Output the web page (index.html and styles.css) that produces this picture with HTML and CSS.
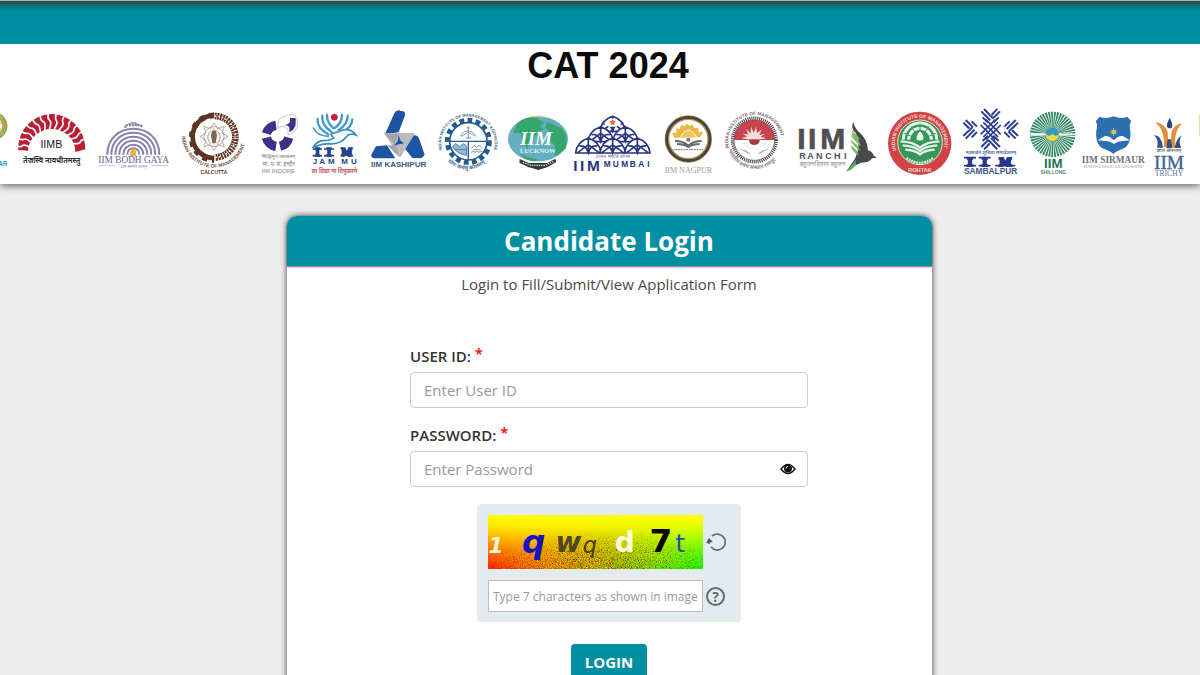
FILE: index.html
```html
<!DOCTYPE html>
<html lang="en">
<head>
<meta charset="utf-8">
<title>CAT 2024 - Candidate Login</title>
<link rel="stylesheet" href="styles.css">
</head>
<body>
<div class="topbar"></div>
<header class="masthead">
  <h1 class="masthead-title">CAT 2024</h1>
  <div class="logos">
    <svg width="12" height="74" viewBox="0 18 36 222" role="img" aria-label="IIM Amritsar">
      <circle cx="-20" cy="78" r="34" fill="none" stroke="#83b85a" stroke-width="14"/>
      <circle cx="-20" cy="78" r="34" fill="none" stroke="#e99a50" stroke-width="12" stroke-dasharray="8 12"/>
      <circle cx="-20" cy="78" r="41" fill="none" stroke="#6aa949" stroke-width="3"/>
      <circle cx="5" cy="78" r="10" fill="none" stroke="#e58345" stroke-width="3"/>
      <text x="22" y="199" text-anchor="end" font-size="19" class="sans bold" fill="#2b9dbe">AR</text>
    </svg>
    <svg width="80" height="74" viewBox="36 18 240 222" role="img" aria-label="IIM Bangalore">
      <defs><path id="ray" d="M155 98C143 86 166 72 153 60C147 54 148 49 151 39" fill="none" stroke="#fff" stroke-width="5"/></defs>
      <path d="M54 148A101 106 0 0 1 256 148L226 156A68 64 0 0 0 84 152L55 150Z" fill="#b91f35"/>
      <use href="#ray" transform="rotate(-81 155 150)"/><use href="#ray" transform="rotate(-68 155 150)"/><use href="#ray" transform="rotate(-55 155 150)"/><use href="#ray" transform="rotate(-42 155 150)"/><use href="#ray" transform="rotate(-29 155 150)"/><use href="#ray" transform="rotate(-16 155 150)"/><use href="#ray" transform="rotate(-3 155 150)"/><use href="#ray" transform="rotate(10 155 150)"/><use href="#ray" transform="rotate(23 155 150)"/><use href="#ray" transform="rotate(36 155 150)"/><use href="#ray" transform="rotate(49 155 150)"/><use href="#ray" transform="rotate(62 155 150)"/><use href="#ray" transform="rotate(75 155 150)"/>
      <text x="154" y="143" text-anchor="middle" font-size="32" class="sans" fill="#222">IIMB</text>
      <text x="155" y="188" text-anchor="middle" font-size="22" class="deva bold" fill="#333">तेजस्वि नावधीतमस्तु</text>
    </svg>
    <svg width="84" height="74" viewBox="276 18 252 222" role="img" aria-label="IIM Bodh Gaya">
      <g fill="none" stroke="#8581ae" stroke-width="6">
        <path d="M322 164C322 60 478 60 478 164M334 164C334 76 466 76 466 164M346 164C346 92 454 92 454 164M358 164C358 108 442 108 442 164M370 164C370 124 430 124 430 164M382 164C382 138 418 138 418 164"/>
        <path d="M376 84v-8h48v8M386 74q14-10 28 0" stroke-dasharray="7 2"/>
      </g>
      <path d="M400 142q-13 16-8 26h16q5-10-8-26" fill="#e8b33c"/>
      <text x="401" y="190" text-anchor="middle" font-size="28" class="serif" fill="#65628f">IIM BODH GAYA</text>
      <path d="M295 197h50m110 0h50" stroke="#aaa8c6" stroke-width="2"/>
      <text x="401" y="204" text-anchor="middle" font-size="12" class="deva" fill="#8c8aae">ज्ञानं सन्मति परमम्</text>
    </svg>
    <svg width="76" height="74" viewBox="18 18 228 222" role="img" aria-label="IIM Calcutta">
      <defs><path id="calcutta-ring" d="M36 107A96 96 0 0 0 228 107"/></defs>
      <g fill="none" stroke="#5f3420">
        <path d="M132 46A64 64 0 0 0 132 174" stroke-width="14"/>
        <path d="M132 46A67 67 0 0 0 132 180" stroke-width="17" stroke-dasharray="15 14"/>
        <path d="M134 48A62 62 0 0 1 134 172" stroke-width="20" stroke-dasharray="6 2"/>
        <path d="M134 48A62 62 0 0 1 134 172" stroke="#fff" stroke-width="5" stroke-dasharray="4 7"/>
      </g>
      <g fill="none" stroke="#9c877b" stroke-width="2">
        <path d="M132 68l11 18 20-7-7 20 18 11-18 11 7 20-20-7-11 18-11-18-20 7 7-20-18-11 18-11-7-20 20 7z"/>
        <circle cx="132" cy="110" r="30"/><circle cx="132" cy="110" r="19" stroke-dasharray="3 2"/>
        <path d="M122 94c-12 14-10 26 0 38M142 94c12 14 10 26 0 38M132 84v50"/>
      </g>
      <path d="M126 92h12l3 15-4 22h-10l-4-22z" fill="#846451"/>
      <text font-size="15" class="sans bold" fill="#735344"><textPath href="#calcutta-ring" startOffset="2">INDIAN INSTITUTE OF MANAGEMENT</textPath></text>
      <text x="132" y="222" text-anchor="middle" font-size="15" class="sans bold" fill="#54382b">CALCUTTA</text>
    </svg>
    <svg width="52" height="74" viewBox="246 18 156 222" role="img" aria-label="IIM Indore">
      <g fill="none" stroke="#3b3388" stroke-width="28">
        <path d="M318 76A35 35 0 0 0 289 101M289 113A35 35 0 0 0 318 139M330 139A35 35 0 0 0 356 113"/>
      </g>
      <path d="M324 86V70q0-18 24-22l20-6 14 12v26q-10 22-28 25v-16q-8-10-18-11z" fill="#fff" stroke="#aaa" stroke-width="2"/>
      <path d="M360 54h17v20q-4 16-19 22V82q-7-8-16-7 13-1 18-9z" fill="#3b3388"/>
      <text x="325" y="174" text-anchor="middle" font-size="15" class="deva" fill="#777">सिद्धिमूलं प्रबन्धनम्</text>
      <text x="325" y="198" text-anchor="middle" font-size="17" class="deva" fill="#777">भा. प्र. सं. इन्दौर</text>
      <text x="325" y="220" text-anchor="middle" font-size="18" class="sans" fill="#888">IIM INDORE</text>
    </svg>
    <svg width="60" height="74" viewBox="402 18 180 222" role="img" aria-label="IIM Jammu">
      <circle cx="493" cy="52" r="10" fill="#c91f32"/>
      <g fill="none" stroke="#3e9bc9" stroke-width="7" stroke-linecap="round">
        <path d="M443 57q-4 26 32 46M457 47q-4 28 27 48M471 45q0 24 20 40M547 58q0 24-32 39M533 47q1 25-27 43M516 45q0 23-20 38"/>
        <path d="M430 84q12 24 45 25" stroke-width="5"/>
      </g>
      <path d="M482 101q20-4 28-8 30-12 48 12-12-5-24 0-22 30-56 26l-22 2-26 8q12-18 29-19 23 0 32-8-7-8-9-13" fill="#fff" stroke="#328fbf" stroke-width="5"/>
      <text x="442 477 530" y="168" text-anchor="middle" font-size="31" class="slab bold" fill="#24458b" stroke="#24458b" stroke-width="5">IIM</text>
      <path d="M428 147h28m6 0h30M428 167h28m6 0h30" stroke="#24458b" stroke-width="5"/>
      <text x="428 448 474 514 543" y="193" font-size="24" class="sans bold" fill="#24458b">JAMMU</text>
      <text x="493" y="218" text-anchor="middle" font-size="17" class="deva bold" fill="#c25a66">सा विद्या या विमुक्तये</text>
    </svg>
    <svg width="68" height="74" viewBox="12 18 204 222" role="img" aria-label="IIM Kashipur">
      <path d="M103 40q8-14 20-7 16 0 11 16l-18 48-41 6zM48 139l33-3 25 39H42q-14-4-5-17zM137 109l30-3q8 2 11 12l16 46q-8 13-20 10h-17l-35-44z" fill="#1e55a2"/>
      <path d="M72 99h94l-46 74z" fill="#bbbcc0"/>
      <path d="M72 99l31 33 14-29zM82 136l35 35-9-36z" fill="#a3a5aa"/>
      <path d="M116 106l6 16 10 8-14 3-16 3 12-14z" fill="#1e55a2"/>
      <text x="116" y="202" text-anchor="middle" font-size="24" class="sans bold" fill="#355887">IIM KASHIPUR</text>
    </svg>
    <svg width="70" height="74" viewBox="216 18 210 222" role="img" aria-label="IIM Kozhikode">
      <defs><path id="kozhikode-ring" d="M247 151A80 80 0 1 1 401 151"/><path id="kozhikode-foot" d="M258 181Q320 237 386 181"/></defs>
      <circle cx="325" cy="124" r="62" fill="none" stroke="#225b91" stroke-width="17" stroke-dasharray="14 10"/>
      <circle cx="325" cy="124" r="56" fill="#fff" stroke="#225b91" stroke-width="5"/>
      <path d="M270 124h110M325 124v55" stroke="#225b91" stroke-width="4"/>
      <path d="M300 107q24-30 48 0M325 80v36M303 109l22-12 22 12M317 114h17M321 86l4-6 4 6" stroke="#526f85" stroke-width="2" fill="none"/>
      <path d="M277 140l10-9 12 9 12-9 9 9v26q-28-4-43-26M284 149h34" fill="#9bbbd2" stroke="#3e83ad" stroke-width="3"/>
      <path d="M334 145l8-9 8 6 8-6 8 10M333 157q6-8 12 0 6-8 12 0 6-8 12 0M340 149h22" fill="none" stroke="#7e98ab" stroke-width="3"/>
      <text font-size="12" class="sans bold" fill="#3c6081"><textPath href="#kozhikode-ring">INDIAN INSTITUTE OF MANAGEMENT KOZHIKODE</textPath></text>
      <text font-size="16" class="deva bold" fill="#4b7292"><textPath href="#kozhikode-foot" startOffset="6">योगः कर्मसु कौशलम्</textPath></text>
    </svg>
    <svg width="68" height="74" viewBox="426 18 204 222" role="img" aria-label="IIM Lucknow">
      <path d="M468 70q64-46 132 0l-22 14h-88z" fill="#e2ca67"/>
      <ellipse cx="534" cy="117" rx="90" ry="67" fill="#64aec1"/>
      <path d="M470 73q24-27 62-18l22 13-13 9 11 13-16 3-15 24-12 3-6 27-15-14-6-33-22-2zM562 66l41 18 17 22-2 39-28 22-11-10 6-20-18-19 7-17-18-19zM478 160l25 11 36 9-18 4q-26-3-43-24" fill="#35a66c"/>
      <text x="480" y="136" font-size="58" class="serif bold italic" fill="#f9fff9">IIM</text>
      <text x="534" y="160" text-anchor="middle" font-size="20" class="serif bold" fill="#e1f7ef">LUCKNOW</text>
      <path d="M479 177l28 12h55l24-13 3 10-26 15-9 3-19 6-19-6-10-2-28-14z" fill="#343c3b"/>
      <path d="M489 187l24 9h43l24-11" fill="none" stroke="#ddd" stroke-width="4" stroke-dasharray="4 3"/>
    </svg>
    <svg width="86" height="74" viewBox="30 18 258 222" role="img" aria-label="IIM Mumbai">
      <defs><path id="arch" d="M0 45Q3 12 38 0Q73 12 76 45ZM6 44L38 20L70 44M38 0V44M11 24Q31 20 38 44Q45 20 65 24" fill="#fff" stroke="#29347e" stroke-width="5"/></defs>
      <use href="#arch" x="120" y="49"/><use href="#arch" x="84" y="80"/><use href="#arch" x="158" y="80"/><use href="#arch" x="47" y="114"/><use href="#arch" x="120" y="114"/><use href="#arch" x="194" y="114"/>
      <path d="M132 72q12-12 26-17 14 5 26 17l-14 8h-24z" fill="#fff"/>
      <path d="M158 57l3 6 7 1-5 5 1 7-6-3-6 3 1-7-5-5 7-1z" fill="#e86732"/>
      <text x="158" y="175" text-anchor="middle" font-size="16" class="deva" fill="#777">ज्ञानेन भवति शोभा</text>
      <text x="40 60 81" y="213" font-size="46" class="sans bold" fill="#29347e">IIM</text>
      <text x="131 158 184 209 235 262" y="201" font-size="25" class="sans bold" fill="#29347e">MUMBAI</text>
    </svg>
    <svg width="60" height="74" viewBox="288 18 180 222" role="img" aria-label="IIM Nagpur">
      <circle cx="385" cy="117" r="64" fill="#fff" stroke="#b98a45" stroke-width="14"/>
      <circle cx="385" cy="117" r="65" fill="none" stroke="#424346" stroke-width="8"/>
      <path d="M343 113L336 98l14 1-2-14 12 2 3-13 10 5 8-8 8 7 9-5 5 12 13-2-1 14 15-1-10 16z" fill="#efb73f"/>
      <path d="M361 111q24-42 49 0" fill="#f2c45c" stroke="#fff" stroke-width="3"/>
      <path d="M345 123q25 0 40 14 15-14 40-14M351 132q20 0 34 9 14-9 34-9" fill="none" stroke="#64676c" stroke-width="6"/>
      <circle cx="385" cy="119" r="6" fill="#777"/><path d="M338 149h92" stroke="#777" stroke-width="3" stroke-dasharray="6 2"/>
      <text x="385" y="218" text-anchor="middle" font-size="24" class="serif" fill="#999">IIM NAGPUR</text>
    </svg>
    <svg width="74" height="74" viewBox="18 18 222 222" role="img" aria-label="IIM Raipur">
      <defs><path id="raipur-ring" d="M66 166A80 80 0 1 1 205 163"/><path id="raipur-foot" d="M55 150A85 85 0 0 0 216 149"/></defs>
      <path d="M72 120a61 61 0 0 1 122 0z" fill="#c7444e"/>
      <circle cx="133" cy="120" r="66" fill="none" stroke="#403236" stroke-width="9" stroke-dasharray="3 3"/>
      <circle cx="133" cy="120" r="61" fill="none" stroke="#593d40" stroke-width="2"/>
      <path d="M112 118l-18-4 17-4-14-10 18 4-7-17 14 13 1-20 8 18 8-18 2 20 14-12-7 17 17-4-13 9 17 5-17 3z" fill="#f7dedb"/>
      <path d="M117 120a16 16 0 0 0 32 0" fill="#a83744"/>
      <path d="M96 129l35 7 38-7-24 15h-27z" fill="#fff" stroke="#ddd" stroke-width="2"/>
      <path d="M92 147l22 12M103 150l18 12M173 147l-22 12M162 150l-18 12" stroke="#888" stroke-width="2"/>
      <text font-size="14" class="sans bold" fill="#7b6869"><textPath href="#raipur-ring" startOffset="24">INDIAN INSTITUTE OF MANAGEMENT</textPath></text>
      <text font-size="16" class="deva bold" fill="#8b8587"><textPath href="#raipur-foot">भारतीय प्रबंध संस्थान रायपुर</textPath></text>
    </svg>
    <svg width="92" height="74" viewBox="240 18 276 222" role="img" aria-label="IIM Ranchi">
      <text x="262 294 331" y="148" font-size="90" class="sans bold" fill="#505054" stroke="#505054" stroke-width="2">IIM</text>
      <text x="268 292 318 346 372 402" y="177" font-size="27" class="sans bold" fill="#505054">RANCHI</text>
      <text x="269" y="198" font-size="19" class="deva" fill="#8b8b8f">बहुजनहिताय बहुजन</text>
      <path d="M430 65q3 20 23 37 19 18 21 49 14 4 16 15l10 7-14 2q-8 14-33 13l-21 10-24 17 27-39q20-45 2-78-16-12-7-33" fill="#49494d"/>
      <path d="M425 108q25 12 26 29-17-16-26-29M423 122q22 14 28 30-19-13-28-30M424 138q17 12 21 27-17-10-21-27M427 93l20 20-1 8-20-17" fill="#83c264" stroke="#59a857" stroke-width="2"/>
      <path d="M410 214l28-35-2 20-14 12z" fill="#65ae5d"/>
    </svg>
    <svg width="74" height="74" viewBox="6 18 222 222" role="img" aria-label="IIM Rohtak">
      <defs><path id="rohtak-seal" d="M50 154A74 74 0 1 1 188 154"/></defs>
      <circle cx="119" cy="130" r="95" fill="#d14345"/>
      <circle cx="120" cy="127" r="67" fill="#37965a" stroke="#e8e6d9" stroke-width="3"/>
      <text font-size="15" class="sans bold" fill="#f9dcd5"><textPath href="#rohtak-seal" startOffset="4">INDIAN INSTITUTE OF MANAGEMENT</textPath></text>
      <text x="120" y="215" text-anchor="middle" font-size="17" class="sans bold" fill="#f9dcd5">ROHTAK</text>
      <path d="M70 119a50 50 0 0 1 100 0M86 119a34 34 0 0 1 68 0" fill="none" stroke="#e6f5e9" stroke-width="9"/>
      <path d="M93 79l12 18M147 79l-12 18M120 70v20M72 100l20 8M168 100l-20 8" stroke="#37965a" stroke-width="3"/>
      <path d="M120 92q-18 18-9 31h18q9-15-9-31" fill="#e6f5e9" stroke="#37965a" stroke-width="3"/>
      <path d="M62 124q40 2 58 19 18-17 58-19M68 136q37 2 52 17 16-15 52-17M76 149q30 2 44 14 14-12 44-14" fill="none" stroke="#e6f5e9" stroke-width="7"/>
      <path d="M79 174q42 28 81 0" fill="none" stroke="#d4ead7" stroke-width="7" stroke-dasharray="6 2"/>
    </svg>
    <svg width="68" height="74" viewBox="228 18 204 222" role="img" aria-label="IIM Sambalpur">
      <defs><path id="weave" d="M-24 -8L-8 8M-17 -15L-1 1M-10 -22L6 -6M24 -8L8 8M17 -15L6 -4M10 -22L3 -15M-28 -26L-12 -10M28 -26L12 -10M-20 -33L-4 -17M20 -33L4 -17" fill="none" stroke="#293d91" stroke-width="6"/></defs>
      <use href="#weave" transform="translate(332 60)"/>
      <use href="#weave" transform="translate(332 115) rotate(180)"/>
      <use href="#weave" transform="translate(283 88) rotate(-90)"/>
      <use href="#weave" transform="translate(381 88) rotate(90)"/>
      <path d="M302 75l44 44M310 67l44 44M318 59l44 44M362 75l-44 44M354 67l-44 44M346 59l-44 44" stroke="#293d91" stroke-width="5"/>
      <text x="332" y="163" text-anchor="middle" font-size="14" class="deva bold" fill="#6470ad">नवसर्जनं शुचिता समावेशनम्</text>
      <text x="270 314 376" y="197" text-anchor="middle" font-size="34" class="slab bold" fill="#253889" stroke="#253889" stroke-width="6">IIM</text>
      <path d="M252 173h36m8 0h36M252 197h36m8 0h36M346 197h60" stroke="#253889" stroke-width="5"/>
      <text x="332" y="221" text-anchor="middle" font-size="25" class="sans bold" fill="#40508e">SAMBALPUR</text>
    </svg>
    <svg width="54" height="74" viewBox="12 18 162 222" role="img" aria-label="IIM Shillong">
      <circle cx="98" cy="103" r="43" fill="none" stroke="#348764" stroke-width="50" stroke-dasharray="4 2"/>
      <path d="M31 103h134" stroke="#fff" stroke-width="5"/>
      <circle cx="97" cy="103" r="20" fill="#309bbb"/><path d="M77 103l10 5 10-6 10 6 10-5a20 20 0 0 1-40 0" fill="#edd940"/>
      <text x="100" y="205" text-anchor="middle" font-size="40" class="sans bold" fill="#267653">IIM</text>
      <text x="100" y="223" text-anchor="middle" font-size="15" class="sans bold" fill="#568a71">SHILLONG</text>
    </svg>
    <svg width="72" height="74" viewBox="174 18 216 222" role="img" aria-label="IIM Sirmaur">
      <path d="M239 50q18 9 41-1 24 10 42 1l12 14q-8 10-3 28 4 48-30 57-15 6-21 13-6-7-21-13-35-9-30-57 5-18-2-28z" fill="#2c70b1"/>
      <path d="M282 121q-15-15-27-13l-22 13 22 2q15-1 27 9 12-10 28-9l20-2-22-13q-13-2-26 13" fill="#f5fafd"/>
      <circle cx="281" cy="96" r="7" fill="#e8c553"/><path d="M281 84v24M269 96h24M273 88l16 16M289 88l-16 16" stroke="#d8c779" stroke-width="2"/>
      <text x="280" y="189" text-anchor="middle" font-size="28" class="serif bold" fill="#6d7077">IIM SIRMAUR</text>
      <text x="281" y="204" text-anchor="middle" font-size="14" class="serif" fill="#999">KNOWLEDGE LEADERSHIP</text>
    </svg>
    <svg width="40" height="74" viewBox="390 18 120 222" role="img" aria-label="IIM Trichy">
      <path d="M449 53q-9 17-8 24a8 8 0 0 0 16 0q0-8-8-24" fill="#28467b"/>
      <path d="M405 66q32 5 38 31l2 41-14 5q6-52-26-77M487 70q-28 2-33 32l-2 39 15 4q-7-52 20-75" fill="#e78b38"/>
      <path d="M402 105q25 2 27 38h-18q7-22-9-38M486 106q-17 8-22 38h19q-9-25 3-38M443 118h10l4 27h-18z" fill="#315286"/>
      <text x="447" y="157" text-anchor="middle" font-size="15" class="deva bold" fill="#777">ज्ञानं अनन्तम्</text>
      <text x="447" y="207" text-anchor="middle" font-size="58" class="serif" fill="#41618f" stroke="#41618f">IIM</text>
      <text x="447" y="228" text-anchor="middle" font-size="23" class="serif" fill="#5e769a">TRICHY</text>
    </svg>
    <svg width="10" height="74" viewBox="510 18 30 222" role="img" aria-label="IIM Udaipur"><path d="M540 42h-3v64h3z" fill="#d6e4a4"/></svg>
  </div>
</header>
<main class="page">
  <section class="card">
    <h2 class="card-title">Candidate Login</h2>
    <p class="card-note">Login to Fill/Submit/View Application Form</p>
    <form class="form">
      <label class="label" for="user">USER ID: <span class="star">*</span></label>
      <input class="field" id="user" type="text" placeholder="Enter User ID">
      <label class="label label-next" for="password">PASSWORD: <span class="star">*</span></label>
      <div class="password">
        <input class="field" id="password" type="password" placeholder="Enter Password">
        <button class="icon-button eye" type="button" aria-label="Show password">
          <svg width="16" height="12" viewBox="0 0 16 12"><path d="M1 6Q8-3 15 6Q8 15 1 6Z" fill="#fff" stroke="#111" stroke-width="1.3"/><circle cx="8" cy="5.5" r="4" fill="#111"/><path d="M6 5.5Q6 3.5 8 3.4" fill="none" stroke="#fff"/></svg>
        </button>
      </div>
      <div class="captcha">
        <svg class="captcha-image" width="215" height="54" viewBox="54 58 644 162" preserveAspectRatio="none" role="img" aria-label="Captcha image">
          <defs>
            <linearGradient id="across"><stop stop-color="#ff1800"/><stop offset=".25" stop-color="#ed6500"/><stop offset=".55" stop-color="#9a9000"/><stop offset=".8" stop-color="#4ce000"/><stop offset="1" stop-color="#00fa0c"/></linearGradient>
            <linearGradient id="down" x2="0" y2="1"><stop stop-color="#ff0"/><stop offset=".2" stop-color="#ff0" stop-opacity=".9"/><stop offset="1" stop-color="#ff0" stop-opacity="0"/></linearGradient>
            <radialGradient id="spread" cx=".53" cy="1" r=".6" gradientTransform="translate(0 -.2) scale(1 1.2)"><stop stop-color="#bbb"/><stop offset=".5" stop-color="#888"/><stop offset="1" stop-color="#000"/></radialGradient>
            <mask id="grain-mask"><path d="M54 58h644v162H54z" fill="url(#spread)"/></mask>
            <filter id="grain" x="0" y="0" width="1" height="1"><feTurbulence type="fractalNoise" baseFrequency=".3" numOctaves="2" seed="7"/><feColorMatrix values="5 0 0 0 -1.8 0 5 0 0 -2 0 0 0 0 0 0 0 5 0 -2"/></filter>
          </defs>
          <path d="M54 58h644v162H54z" fill="url(#across)"/>
          <path d="M54 58h644v162H54z" fill="url(#down)"/>
          <g mask="url(#grain-mask)"><path d="M54 58h644v162H54z" filter="url(#grain)"/></g>
          <g class="glyphs">
            <text x="55" y="171" font-size="66" class="bold italic" fill="#fff3d0">1</text>
            <text x="156" y="172" font-size="98" class="bold italic" fill="#1712c4">q</text>
            <text x="256" y="169" font-size="84" class="bold italic" fill="#51471b">w</text>
            <text x="338" y="173" font-size="67" class="italic" fill="#4b3b0a">q</text>
            <text x="434" y="170" font-size="84" class="bold" fill="#fffbd9">d</text>
            <text x="538" y="168" font-size="98" class="bold" fill="#060a00">7</text>
            <text x="616" y="170" font-size="74" fill="#24509c">t</text>
          </g>
        </svg>
        <button class="icon-button" type="button" aria-label="Refresh captcha">
          <svg width="20" height="20" viewBox="0 0 20 20"><path d="M6 4A8 8 0 1 1 5 15M3 12V8" fill="none" stroke="#666b70" stroke-width="1.7"/><path d="M0 11L3 6L7 10Z" fill="#555a5f"/></svg>
        </button>
        <input class="captcha-field" type="text" aria-label="Captcha text" placeholder="Type 7 characters as shown in image">
        <button class="icon-button help" type="button" aria-label="Captcha help">?</button>
      </div>
      <button class="login" type="submit">LOGIN</button>
    </form>
  </section>
</main>
</body>
</html>
```
FILE: styles.css
```css
* { box-sizing: border-box; }
html { background: #ededed; }
body { margin: 0; font-family: "Open Sans", "Noto Sans", sans-serif; color: #333; }
.topbar {
  height: 44px;
  border-top: 1px solid #9cbcbc;
  background: linear-gradient(#2b4a4e 0, #1f5b63 3px, #0b7886 6px, #008ea3 11px);
}
.masthead { height: 140px; background: #fff; box-shadow: 0 1px 8px rgba(0, 0, 0, .7); overflow: hidden; clip-path: inset(0 0 -12px); }
.masthead-title { margin: 0; padding-left: 16px; font: bold 36px/44px "Liberation Sans", Arial, sans-serif; color: #0b0b0b; text-align: center; }
.logos { display: flex; justify-content: center; margin-top: 18px; }
.logos svg { flex: none; overflow: visible; }
.sans { font-family: "Liberation Sans", Arial, sans-serif; }
.serif { font-family: "Liberation Serif", "Times New Roman", serif; }
.slab { font-family: "DejaVu Serif", serif; }
.deva { font-family: "Noto Sans Devanagari", "Noto Sans", "FreeSans", sans-serif; }
.bold { font-weight: bold; }
.italic { font-style: italic; }
.page { padding: 32px 0 40px 18px; }
.card { width: 645px; max-width: 100%; margin: 0 auto; background: #fff; border-radius: 10px; box-shadow: 0 0 6px rgba(0, 0, 0, .75); }
.card-title { margin: 0; border-radius: 10px 10px 0 0; background: #008ea3; box-shadow: 0 1px 2px rgba(0, 0, 0, .6); color: #fff; font-size: 26px; line-height: 50px; text-align: center; }
.card-note { margin: 0; padding-top: 8px; color: #4a4a4a; font-size: 15px; line-height: 20px; text-align: center; }
.form { display: flex; flex-direction: column; width: 398px; max-width: 100%; margin: 0 auto; padding: 52px 0 40px; }
.label { font-size: 15px; line-height: 20px; font-weight: 600; margin-bottom: 6px; }
.label-next { margin-top: 17px; }
.star { color: #f00; font-size: 15px; line-height: 1; vertical-align: 3px; }
.field { width: 100%; height: 36px; padding: 0 13px; border: 1px solid #ccc; border-radius: 4px; background: #fff; font: 15px "Open Sans", sans-serif; outline: 0; }
.field::placeholder, .captcha-field::placeholder { color: #999; opacity: 1; }
.password { position: relative; }
.icon-button { display: flex; align-items: center; justify-content: center; padding: 0; border: 0; background: none; }
.eye { position: absolute; right: 12px; top: 12px; }
.captcha { display: grid; grid-template-columns: 215px 20px; gap: 11px 3px; align-items: center; align-self: center; width: 264px; margin-top: 17px; padding: 11px 11px 10px; border-radius: 4px; background: #e4ebef; }
.captcha-image { display: block; }
.glyphs { font-family: "DejaVu Sans", sans-serif; }
.captcha-field { width: 100%; height: 32px; padding: 0 4px; border: 1px solid #bbb; background: #fff; font: 12px "Open Sans", sans-serif; }
.help { width: 19px; height: 19px; border: 2px solid #666b70; border-radius: 50%; color: #666b70; font: bold 14px/15px "Open Sans", sans-serif; }
.login { align-self: center; height: 36px; margin-top: 22px; padding: 0 14px; border: 0; border-radius: 4px; background: #008ea3; color: #fff; font: bold 15px "Open Sans", sans-serif; }
```
